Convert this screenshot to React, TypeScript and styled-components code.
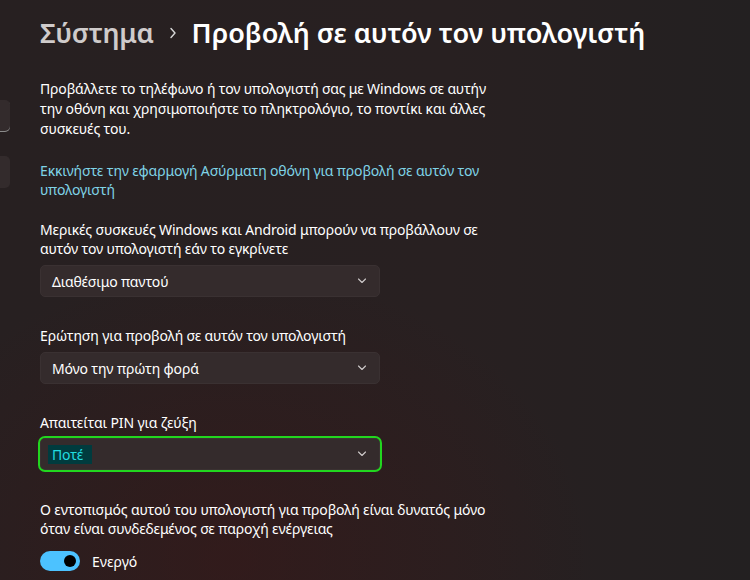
import React from "react";
import styled, { createGlobalStyle } from "styled-components";

const Global = createGlobalStyle`
  html, body { margin: 0; padding: 0; }
  body {
    width: 750px;
    height: 580px;
    overflow: hidden;
    font-family: "Noto Sans", "Open Sans", sans-serif;
  }
`;

const Page = styled.div`
  width: 750px;
  height: 580px;
  display: flex;
  background:
    radial-gradient(ellipse 520px 420px at 230px 560px, rgba(60, 22, 22, 0.5), transparent 70%),
    linear-gradient(90deg, #272021 0%, #282021 60%, #232021 100%);
  color: #ffffff;
  overflow: hidden;
`;

const NavStub = styled.div`
  width: 10px;
  flex: none;
  overflow: hidden;
  display: flex;
  flex-direction: column;
  padding-top: 100px;
  gap: 24px;
`;

const NavCard = styled.div<{ $selected?: boolean }>`
  width: 40px;
  height: 32px;
  margin-left: -30px;
  border-radius: 5px;
  background: #332b2c;
  box-shadow: ${(p) => (p.$selected ? "inset 0 -1px 0 #8a8a8a" : "none")};
`;

const Main = styled.div`
  flex: 1;
  display: flex;
  flex-direction: column;
  padding-left: 30px;
`;

const Header = styled.h1`
  margin: 0;
  padding-top: 14px;
  display: flex;
  align-items: center;
  font-size: 27px;
  font-weight: 600;
  line-height: 38px;
  white-space: nowrap;
`;

const Crumb = styled.span`
  color: #cfcbcb;
  letter-spacing: -0.3px;
`;

const Sep = styled.span`
  display: inline-flex;
  width: 38px;
  justify-content: center;
`;

const Current = styled.span`
  color: #ffffff;
`;

const Content = styled.div`
  width: 470px;
  padding-top: 27px;
  display: flex;
  flex-direction: column;
`;

const Para = styled.p`
  margin: 0;
  font-size: 14px;
  line-height: 20px;
  letter-spacing: -0.15px;
  color: #ffffff;
  white-space: nowrap;
`;

const Link = styled.a`
  margin-top: 22px;
  font-size: 14px;
  line-height: 19px;
  letter-spacing: -0.15px;
  color: #7fd3e6;
  text-decoration: none;
  white-space: nowrap;
`;

const Field = styled.div<{ $mt: number }>`
  margin-top: ${(p) => p.$mt}px;
  display: flex;
  flex-direction: column;
`;

const Label = styled.div`
  font-size: 14px;
  line-height: 19px;
  letter-spacing: -0.15px;
  color: #ffffff;
  white-space: nowrap;
`;

const Select = styled.div<{ $focused?: boolean }>`
  margin-top: ${(p) => (p.$focused ? 6 : 7)}px;
  width: 340px;
  height: 32px;
  box-sizing: border-box;
  border-radius: 5px;
  background: #342b2c;
  border: 1px solid #3a3132;
  display: flex;
  align-items: center;
  justify-content: space-between;
  padding: 0 12px 0 11px;
  font-size: 14px;
  letter-spacing: -0.15px;
  color: #ffffff;
  outline: ${(p) => (p.$focused ? "2px solid #22d61f" : "none")};
  outline-offset: 0;
`;

const SelectValue = styled.span<{ $highlight?: boolean }>`
  padding: ${(p) => (p.$highlight ? "1px 9px 1px 4px" : "0")};
  margin-left: ${(p) => (p.$highlight ? "-4px" : "0")};
  background: ${(p) => (p.$highlight ? "#003b3e" : "transparent")};
  color: ${(p) => (p.$highlight ? "#22dde0" : "#ffffff")};
  line-height: 17px;
`;

const Chevron = () => (
  <svg width="10" height="6" viewBox="0 0 10 6" fill="none">
    <path d="M1.5 1 L5 4.5 L8.5 1" stroke="#cfcaca" strokeWidth="1.1" strokeLinecap="round" strokeLinejoin="round" />
  </svg>
);

const ToggleRow = styled.div`
  margin-top: 13px;
  display: flex;
  align-items: center;
  gap: 12px;
`;

const Toggle = styled.div`
  width: 40px;
  height: 20px;
  border-radius: 10px;
  background: #4cc2ff;
  display: flex;
  align-items: center;
  justify-content: flex-end;
  padding-right: 4px;
  box-sizing: border-box;
`;

const Knob = styled.div`
  width: 12px;
  height: 12px;
  border-radius: 50%;
  background: #000000;
`;

const ToggleLabel = styled.span`
  font-size: 14px;
  color: #ffffff;
`;

export default function App() {
  return (
    <>
      <Global />
      <Page>
        <NavStub>
          <NavCard $selected />
          <NavCard />
        </NavStub>
        <Main>
          <Header>
            <Crumb>Σύστημα</Crumb>
            <Sep>
              <svg width="8" height="12" viewBox="0 0 8 12" fill="none">
                <path d="M2 1.5 L6 6 L2 10.5" stroke="#d8d8d8" strokeWidth="1.4" strokeLinecap="round" strokeLinejoin="round" />
              </svg>
            </Sep>
            <Current>Προβολή σε αυτόν τον υπολογιστή</Current>
          </Header>
          <Content>
            <Para>
              Προβάλλετε το τηλέφωνο ή τον υπολογιστή σας με Windows σε αυτήν
              <br />
              την οθόνη και χρησιμοποιήστε το πληκτρολόγιο, το ποντίκι και άλλες
              <br />
              συσκευές του.
            </Para>
            <Link href="#">
              Εκκινήστε την εφαρμογή Ασύρματη οθόνη για προβολή σε αυτόν τον
              <br />
              υπολογιστή
            </Link>
            <Field $mt={21}>
              <Label>
                Μερικές συσκευές Windows και Android μπορούν να προβάλλουν σε
                <br />
                αυτόν τον υπολογιστή εάν το εγκρίνετε
              </Label>
              <Select>
                <SelectValue>Διαθέσιμο παντού</SelectValue>
                <Chevron />
              </Select>
            </Field>
            <Field $mt={29}>
              <Label>Ερώτηση για προβολή σε αυτόν τον υπολογιστή</Label>
              <Select>
                <SelectValue>Μόνο την πρώτη φορά</SelectValue>
                <Chevron />
              </Select>
            </Field>
            <Field $mt={29}>
              <Label>Απαιτείται PIN για ζεύξη</Label>
              <Select $focused>
                <SelectValue $highlight>Ποτέ</SelectValue>
                <Chevron />
              </Select>
            </Field>
            <Field $mt={30}>
              <Label>
                Ο εντοπισμός αυτού του υπολογιστή για προβολή είναι δυνατός μόνο
                <br />
                όταν είναι συνδεδεμένος σε παροχή ενέργειας
              </Label>
            </Field>
            <ToggleRow>
              <Toggle>
                <Knob />
              </Toggle>
              <ToggleLabel>Ενεργό</ToggleLabel>
            </ToggleRow>
          </Content>
        </Main>
      </Page>
    </>
  );
}
